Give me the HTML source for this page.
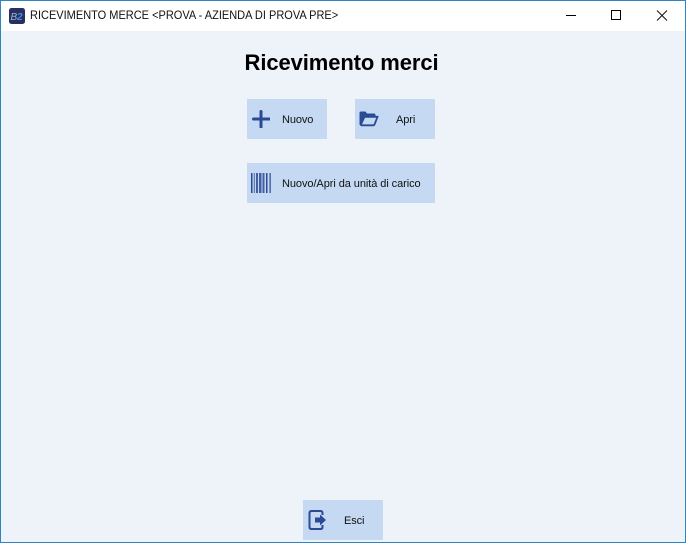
<!DOCTYPE html>
<html><head><meta charset="utf-8">
<style>
html,body{margin:0;padding:0}
body{width:686px;height:543px;position:relative;overflow:hidden;background:#eef2f9;font-family:"Liberation Sans",sans-serif;color:#000}
.abs{position:absolute}
.frame{left:0;top:0;width:684px;height:541px;border:1px solid #2f85c0;pointer-events:none}
.tb{left:1px;top:1px;width:684px;height:30px;background:#fff}
.tt{left:30px;top:8px;font-size:12px;line-height:15px;white-space:nowrap;color:#111;transform:scaleX(.917);transform-origin:0 0}
h1{position:absolute;margin:0;left:0;width:683px;top:49px;text-align:center;font-size:22px;line-height:28px;font-weight:bold;font-family:"Liberation Sans",sans-serif;letter-spacing:-0.1px}
.btn{position:absolute;background:#c5d9f2}
.lb{position:absolute;font-size:11px;line-height:14px;white-space:nowrap;color:#111;letter-spacing:-0.1px}
svg{position:absolute;display:block}
</style></head><body>
<div class="abs tb"></div>
<svg style="left:9px;top:8px" width="16" height="16" viewBox="0 0 16 16"><rect width="16" height="16" rx="2.500" fill="#27305e"/><text x="1.500" y="12" font-size="10" font-style="italic" font-family="Liberation Sans" fill="#9fb4dc">B</text><text x="8" y="12" font-size="10" font-style="italic" font-weight="bold" font-family="Liberation Sans" fill="#4a90e0">2</text></svg>
<div class="abs tt">RICEVIMENTO MERCE &lt;PROVA - AZIENDA DI PROVA PRE&gt;</div>
<svg style="left:560px;top:8px" width="120" height="16" viewBox="0 0 120 16"><path d="M6 7.500H16" stroke="#000" stroke-width="1" fill="none"/><rect x="51.500" y="2.500" width="9" height="9" stroke="#000" stroke-width="1" fill="none"/><path d="M97 2.500L107 12.500M107 2.500L97 12.500" stroke="#111" stroke-width="1" fill="none"/></svg>
<h1>Ricevimento merci</h1>

<div class="btn" style="left:247px;top:99px;width:80px;height:40px"></div>
<svg style="left:252px;top:110px" width="18" height="18" viewBox="0 0 18 18"><path d="M9 1.500V17M1.500 9H17.500" stroke="#2b4a94" stroke-width="3" stroke-linecap="round" fill="none"/></svg>
<div class="lb" style="left:282px;top:113px">Nuovo</div>

<div class="btn" style="left:355px;top:99px;width:80px;height:40px"></div>
<svg style="left:359px;top:110px" width="20" height="17" viewBox="0 0 20 17"><path d="M0.500 3Q0.500 1.500 2 1.500H6.500L8 3.500H15Q16.500 3.500 16.500 5V6H5L2.500 13V16Q0.500 15.500 0.500 14Z" fill="#2b4a94"/><path d="M5.500 6.800H18.500L15.700 14Q15.300 15.300 14 15.300H3Q1.800 15.300 2.200 14Z" fill="none" stroke="#2b4a94" stroke-width="1.800"/></svg>
<div class="lb" style="left:396px;top:113px">Apri</div>

<div class="btn" style="left:247px;top:163px;width:188px;height:40px"></div>
<svg style="left:251px;top:173px" width="20" height="20" viewBox="0 0 20 20"><g fill="#2b4a94"><rect x="0" y="0" width="1.500" height="20"/><rect x="2.800" y="0" width="1" height="20" opacity=".8"/><rect x="5" y="0" width="2" height="20" opacity=".85"/><rect x="8" y="0" width="2.500" height="20" opacity=".85"/><rect x="11.500" y="0" width="2" height="20" opacity=".85"/><rect x="15" y="0" width="1.500" height="20"/><rect x="18.500" y="0" width="1.200" height="20"/></g></svg>
<div class="lb" style="left:282px;top:177px;letter-spacing:-0.07px">Nuovo/Apri da unità di carico</div>

<div class="btn" style="left:303px;top:500px;width:80px;height:40px"></div>
<svg style="left:308px;top:510px" width="20" height="20" viewBox="0 0 20 20"><path d="M14.500 5V3Q14.500 1 12.500 1H3.500Q1.500 1 1.500 3V17Q1.500 19 3.500 19H12.500Q14.500 19 14.500 17V15" fill="none" stroke="#2b4a94" stroke-width="2"/><path d="M7 7.500H12V4.500L18 10L12 15.500V12.500H7Z" fill="#2b4a94"/></svg>
<div class="lb" style="left:344px;top:514px">Esci</div>
<div class="abs frame"></div>
</body></html>
